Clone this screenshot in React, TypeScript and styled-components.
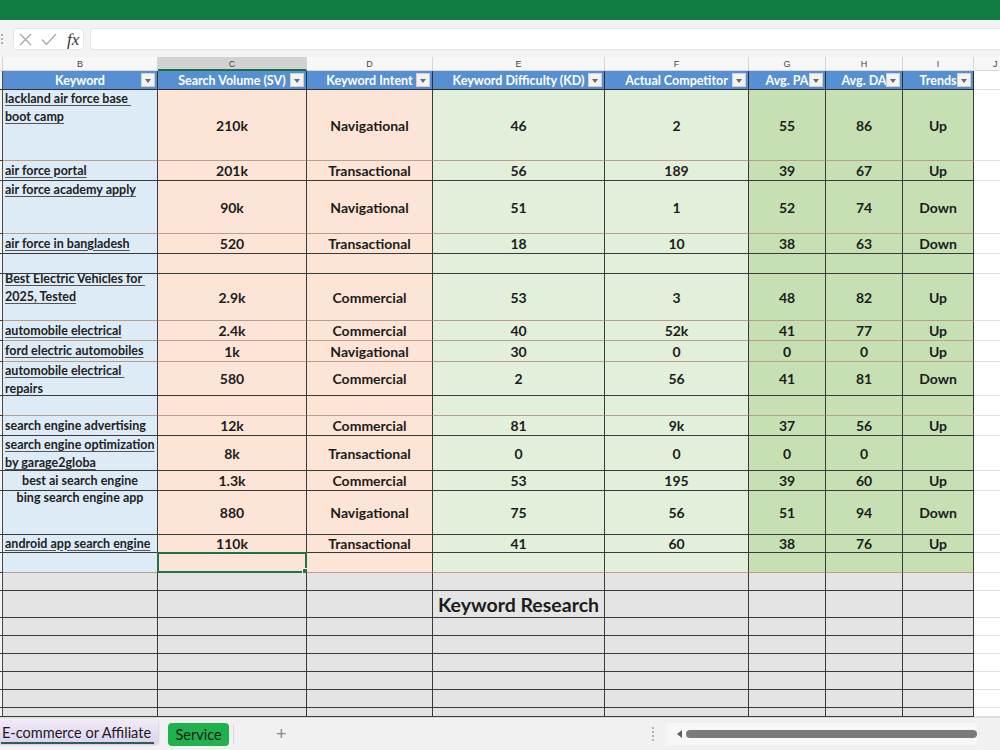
import React from 'react';
import styled, { createGlobalStyle } from 'styled-components';

const GlobalStyle = createGlobalStyle`
  html, body { margin: 0; padding: 0; background: #ffffff; }
  body { font-family: Lato, "Liberation Sans", sans-serif; }
  * { box-sizing: border-box; }
`;

const COLS = '3px 155px 149px 126px 172px 144px 77px 77px 71px 1fr';
const DARK = '#3a3a3a';
const TAN = '#b99e8a';

const FILL = {
  kw: '#ddebf7',
  peach: '#fce4d6',
  lgreen: '#e2efda',
  green: '#c6e0b4',
  gray: '#e4e4e4',
};

const Window = styled.div`
  width: 1000px;
  height: 750px;
  overflow: hidden;
  display: flex;
  flex-direction: column;
  background: #ffffff;
`;

const TitleBar = styled.div`
  flex: none;
  height: 20px;
  background: #107c41;
`;

const FormulaBar = styled.div`
  flex: none;
  height: 37px;
  background: #f3f3f3;
  display: flex;
  align-items: center;
  padding-top: 1px;
`;

const Grip = styled.div`
  width: 13px;
  display: flex;
  flex-direction: column;
  gap: 2px;
  padding-left: 1px;
  span {
    width: 2px;
    height: 2px;
    background: #9a9a9a;
    border-radius: 1px;
  }
`;

const IconBox = styled.div`
  width: 71px;
  height: 22px;
  background: #ffffff;
  border-radius: 4px;
  border: 1px solid #e6e6e6;
  display: flex;
  align-items: center;
  padding-left: 5px;
  gap: 9px;
`;

const Fx = styled.span`
  font-family: "Liberation Serif", serif;
  font-style: italic;
  font-size: 17px;
  color: #333333;
  margin-left: 1px;
  line-height: 1;
`;

const FormulaInput = styled.div`
  flex: 1;
  height: 22px;
  margin-left: 6px;
  background: #ffffff;
  border-radius: 4px 0 0 4px;
  border: 1px solid #e6e6e6;
  border-right: none;
`;

const Sheet = styled.div`
  flex: none;
  display: flex;
  flex-direction: column;
`;

const Row = styled.div<{ $h: number }>`
  display: grid;
  grid-template-columns: ${COLS};
  height: ${(p) => p.$h}px;
`;

const LetterCell = styled.div<{ $active?: boolean; $edge?: boolean }>`
  display: flex;
  align-items: center;
  justify-content: ${(p) => (p.$edge ? 'flex-start' : 'center')};
  padding-left: ${(p) => (p.$edge ? '19px' : '0')};
  padding-top: 1px;
  font-family: "Liberation Sans", sans-serif;
  font-size: 9px;
  color: #444444;
  background: ${(p) => (p.$active ? '#d2d2d2' : '#f7f7f7')};
  border-right: 1px solid ${(p) => (p.$edge ? 'transparent' : '#d6d6d6')};
  border-bottom: ${(p) => (p.$active ? '2px solid #1f6f43' : '1px solid #d6d6d6')};
`;

const StripCell = styled.div<{ $line?: string }>`
  background: #f3f3f3;
  border-right: 1px solid #4a4a4a;
  border-bottom: 1px solid ${(p) => p.$line || '#d6d6d6'};
`;

const HeaderCell = styled.div`
  position: relative;
  background: #5690d2;
  color: #ffffff;
  font-weight: 700;
  font-size: 12.5px;
  display: flex;
  align-items: center;
  justify-content: center;
  border-right: 1px solid #2e2e2e;
  border-bottom: 1px solid #2e2e2e;
  white-space: nowrap;
  overflow: hidden;
`;

const DropButton = styled.span`
  position: absolute;
  right: 2px;
  top: 2px;
  width: 14px;
  height: 14px;
  background: #f3f3f3;
  border: 1px solid #d0d0d0;
  display: flex;
  align-items: center;
  justify-content: center;
  &::after {
    content: '';
    border-left: 3.5px solid transparent;
    border-right: 3.5px solid transparent;
    border-top: 4px solid #6a6a6a;
    margin-top: 1px;
  }
`;

const BlankCell = styled.div<{ $line?: string }>`
  background: #ffffff;
  border-bottom: 1px solid ${(p) => p.$line || '#e1e1e1'};
`;

const Cell = styled.div<{ $fill: string; $line: string; $big?: boolean }>`
  position: relative;
  background: ${(p) => p.$fill};
  border-right: 1px solid ${DARK};
  border-bottom: 1px solid ${(p) => p.$line};
  display: flex;
  align-items: center;
  justify-content: center;
  font-weight: 700;
  font-size: ${(p) => (p.$big ? '19.5px' : '14px')};
  color: #1c1c1c;
  white-space: nowrap;
  min-width: 0;
`;

const SelectedCell = styled(Cell)`
  &::before {
    content: '';
    position: absolute;
    left: -1px;
    top: -1px;
    right: -1px;
    bottom: -1px;
    border: 2px solid #217346;
  }
  &::after {
    content: '';
    position: absolute;
    right: -3px;
    bottom: -3px;
    width: 5px;
    height: 5px;
    background: #217346;
    border: 1px solid #ffffff;
  }
`;

const KeywordCell = styled.div<{ $line: string; $valign: 'top' | 'center'; $centered?: boolean }>`
  background: ${FILL.kw};
  border-right: 1px solid ${DARK};
  border-bottom: 1px solid ${(p) => p.$line};
  display: flex;
  flex-direction: column;
  justify-content: ${(p) => (p.$valign === 'top' ? 'flex-start' : 'center')};
  align-items: ${(p) => (p.$centered ? 'center' : 'flex-start')};
  padding-left: ${(p) => (p.$centered ? '0' : '2px')};
  overflow: hidden;
  min-width: 0;
`;

const KeywordText = styled.span<{ $underline?: boolean; $offset?: number; $tight?: boolean }>`
  display: block;
  font-weight: 700;
  font-size: 12.5px;
  line-height: ${(p) => (p.$tight ? '13px' : '18px')};
  color: #222222;
  white-space: pre;
  margin-top: ${(p) => p.$offset || 0}px;
  text-decoration: ${(p) => (p.$underline ? 'underline' : 'none')};
  text-decoration-color: #555555;
  text-underline-offset: 2px;
`;

const TabBar = styled.div`
  flex: 1;
  background: #f1f1f1;
  display: flex;
  align-items: center;
  border-top: 1px solid #dcdcdc;
`;

const ActiveTab = styled.div`
  align-self: flex-start;
  width: 158px;
  height: 26px;
  margin-top: 1px;
  background: linear-gradient(180deg, #f1ecf7 0%, #ddd0ee 100%);
  border-radius: 0 4px 4px 0;
  box-shadow: 1px 0 2px rgba(0, 0, 0, 0.12);
  display: flex;
  align-items: center;
  padding-left: 2px;
  font-size: 14.5px;
  color: #1a1a1a;
  position: relative;
  &::after {
    content: '';
    position: absolute;
    left: 1px;
    right: 4px;
    bottom: 1px;
    height: 2px;
    background: #2e5d57;
  }
`;

const ServiceTab = styled.div`
  margin-left: 10px;
  width: 61px;
  height: 23px;
  background: #1fb24f;
  border-radius: 4px;
  display: flex;
  align-items: center;
  justify-content: center;
  font-size: 14.5px;
  color: #1a1a1a;
`;

const TabDivider = styled.div`
  width: 1px;
  height: 20px;
  margin-left: 4px;
  background: #d8d8d8;
`;

const AddTab = styled.div`
  margin-left: 42px;
  font-family: "Liberation Sans", sans-serif;
  font-size: 18px;
  color: #8a8a8a;
`;

const ScrollArea = styled.div`
  margin-left: auto;
  display: flex;
  align-items: center;
  padding-right: 23px;
`;

const VDots = styled.div`
  display: flex;
  flex-direction: column;
  gap: 2px;
  margin-right: 13px;
  span {
    width: 2px;
    height: 2px;
    background: #b5b5b5;
  }
`;

const Track = styled.div`
  display: flex;
  align-items: center;
  background: #f7f7f7;
  height: 22px;
  padding-left: 10px;
  gap: 4px;
`;

const ArrowLeft = styled.span`
  width: 0;
  height: 0;
  border-top: 4px solid transparent;
  border-bottom: 4px solid transparent;
  border-right: 5px solid #5e5e5e;
`;

const Thumb = styled.div`
  width: 291px;
  height: 8px;
  border-radius: 4px;
  background: #7a7a7a;
`;

type DataRow = {
  h: number;
  line: string;
  kw?: string[];
  valign?: 'top' | 'center';
  underline?: boolean;
  centered?: boolean;
  offset?: number;
  tight?: boolean;
  vals?: string[];
  selected?: boolean;
};

const DATA: DataRow[] = [
  { h: 71, line: TAN, kw: ['lackland air force base ', 'boot camp'], valign: 'top', underline: true, vals: ['210k', 'Navigational', '46', '2', '55', '86', 'Up'] },
  { h: 20, line: DARK, kw: ['air force portal'], underline: true, vals: ['201k', 'Transactional', '56', '189', '39', '67', 'Up'] },
  { h: 53, line: TAN, kw: ['air force academy apply'], valign: 'top', underline: true, vals: ['90k', 'Navigational', '51', '1', '52', '74', 'Down'] },
  { h: 20, line: DARK, kw: ['air force in bangladesh'], underline: true, vals: ['520', 'Transactional', '18', '10', '38', '63', 'Down'] },
  { h: 20, line: DARK },
  { h: 47, line: TAN, kw: ['Best Electric Vehicles for ', '2025, Tested'], valign: 'top', underline: true, offset: -4, vals: ['2.9k', 'Commercial', '53', '3', '48', '82', 'Up'] },
  { h: 20, line: TAN, kw: ['automobile electrical'], underline: true, vals: ['2.4k', 'Commercial', '40', '52k', '41', '77', 'Up'] },
  { h: 21, line: TAN, kw: ['ford electric automobiles'], underline: true, vals: ['1k', 'Navigational', '30', '0', '0', '0', 'Up'] },
  { h: 34, line: DARK, kw: ['automobile electrical ', 'repairs'], valign: 'top', underline: true, vals: ['580', 'Commercial', '2', '56', '41', '81', 'Down'] },
  { h: 20, line: TAN },
  { h: 20, line: DARK, kw: ['search engine advertising'], vals: ['12k', 'Commercial', '81', '9k', '37', '56', 'Up'] },
  { h: 35, line: DARK, kw: ['search engine optimization', 'by garage2globa'], valign: 'top', underline: true, vals: ['8k', 'Transactional', '0', '0', '0', '0', ''] },
  { h: 20, line: DARK, kw: ['best ai search engine'], centered: true, vals: ['1.3k', 'Commercial', '53', '195', '39', '60', 'Up'] },
  { h: 44, line: DARK, kw: ['bing search engine app'], valign: 'top', centered: true, tight: true, vals: ['880', 'Navigational', '75', '56', '51', '94', 'Down'] },
  { h: 18, line: DARK, kw: ['android app search engine'], underline: true, vals: ['110k', 'Transactional', '41', '60', '38', '76', 'Up'] },
  { h: 20, line: TAN, selected: true },
];

const VAL_FILLS = [FILL.peach, FILL.peach, FILL.lgreen, FILL.lgreen, FILL.green, FILL.green, FILL.green];

const HEADERS = [
  'Keyword',
  'Search Volume (SV)',
  'Keyword Intent',
  'Keyword Difficulty (KD)',
  'Actual Competitor',
  'Avg. PA',
  'Avg. DA',
  'Trends',
];

const LETTERS = ['B', 'C', 'D', 'E', 'F', 'G', 'H', 'I'];

const GRAY_ROWS = [18, 27, 18, 18, 18, 18, 18, 9];

const CrossIcon = () => (
  <svg width="13" height="13" viewBox="0 0 13 13">
    <path d="M1 1 L12 12 M12 1 L1 12" stroke="#a8a8a8" strokeWidth="1.3" fill="none" />
  </svg>
);

const CheckIcon = () => (
  <svg width="16" height="13" viewBox="0 0 16 13">
    <path d="M1 6.5 L5.5 11.5 L15 1" stroke="#a8a8a8" strokeWidth="1.3" fill="none" />
  </svg>
);

export default function App() {
  return (
    <Window>
      <GlobalStyle />
      <TitleBar />
      <FormulaBar>
        <Grip>
          <span />
          <span />
          <span />
        </Grip>
        <IconBox>
          <CrossIcon />
          <CheckIcon />
          <Fx>fx</Fx>
        </IconBox>
        <FormulaInput />
      </FormulaBar>
      <Sheet>
        <Row $h={14}>
          <LetterCell />
          {LETTERS.map((l) => (
            <LetterCell key={l} $active={l === 'C'}>
              {l}
            </LetterCell>
          ))}
          <LetterCell $edge>J</LetterCell>
        </Row>
        <Row $h={19}>
          <StripCell $line="#2e2e2e" />
          {HEADERS.map((h) => (
            <HeaderCell key={h}>
              <span>{h}</span>
              <DropButton />
            </HeaderCell>
          ))}
          <BlankCell />
        </Row>
        {DATA.map((r, i) => (
          <Row key={i} $h={r.h}>
            <StripCell $line={DARK} />
            <KeywordCell $line={r.line} $valign={r.valign || 'center'} $centered={r.centered}>
              {r.kw &&
                r.kw.map((t, j) => (
                  <KeywordText
                    key={j}
                    $underline={r.underline}
                    $tight={r.tight}
                    $offset={j === 0 ? r.offset : 0}
                  >
                    {t}
                  </KeywordText>
                ))}
            </KeywordCell>
            {VAL_FILLS.map((f, j) => {
              const v = r.vals ? r.vals[j] : '';
              if (r.selected && j === 0) {
                return <SelectedCell key={j} $fill={f} $line={r.line} />;
              }
              return (
                <Cell key={j} $fill={f} $line={r.line}>
                  {v}
                </Cell>
              );
            })}
            <BlankCell />
          </Row>
        ))}
        {GRAY_ROWS.map((h, i) => (
          <Row key={`g${i}`} $h={h}>
            <StripCell $line={DARK} />
            {LETTERS.map((l, j) => (
              <Cell key={l} $fill={FILL.gray} $line={DARK} $big={i === 1 && j === 3}>
                {i === 1 && j === 3 ? 'Keyword Research' : ''}
              </Cell>
            ))}
            <BlankCell />
          </Row>
        ))}
      </Sheet>
      <TabBar>
        <ActiveTab>E-commerce or Affiliate</ActiveTab>
        <ServiceTab>Service</ServiceTab>
        <TabDivider />
        <AddTab>+</AddTab>
        <ScrollArea>
          <VDots>
            <span />
            <span />
            <span />
            <span />
          </VDots>
          <Track>
            <ArrowLeft />
            <Thumb />
          </Track>
        </ScrollArea>
      </TabBar>
    </Window>
  );
}
